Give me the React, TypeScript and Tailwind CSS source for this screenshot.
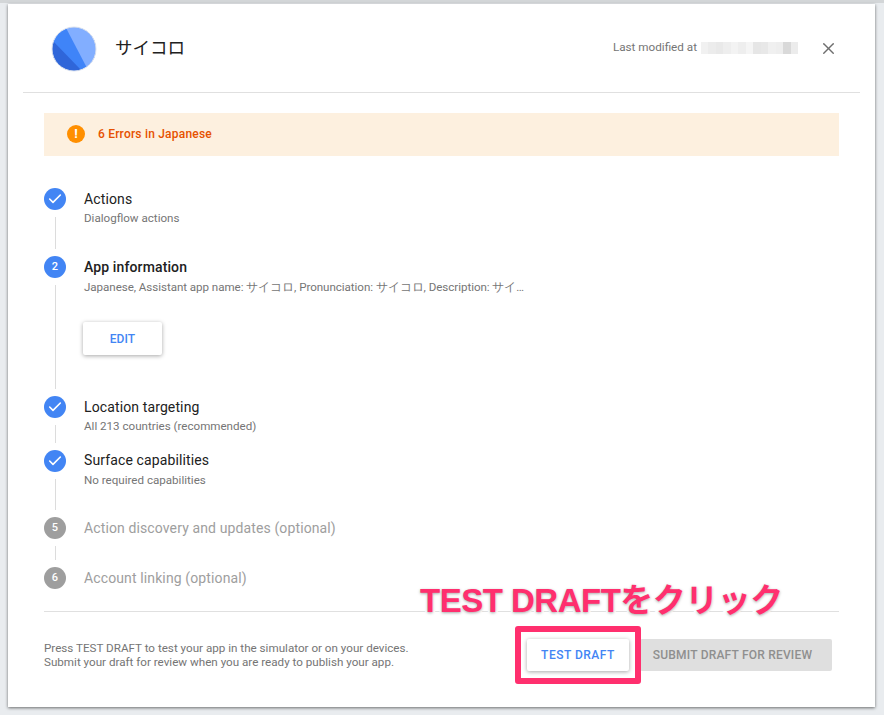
import { Check, X } from "lucide-react";
import type { ReactNode } from "react";

const blurCells = [
  "bg-[#f1f1f1]", "bg-[#ececec]", "bg-[#e9e9e9]", "bg-[#eeeeee]", "bg-[#f3f3f3]", "bg-[#eeeeee]",
  "bg-[#f5f5f5]", "bg-[#e6e6e6]", "bg-[#e8e8e8]", "bg-[#f0f0f0]", "bg-[#eeeeee]", "bg-[#d9d9d9]", "bg-[#ececec]",
];

function Logo() {
  return (
    <svg viewBox="0 0 46 46" className="w-[46px] h-[46px] shrink-0 mt-[1px]">
      <defs>
        <clipPath id="logo-clip">
          <circle cx="23" cy="23" r="22" />
        </clipPath>
      </defs>
      <g clipPath="url(#logo-clip)">
        <rect width="46" height="46" fill="#3f84f8" />
        <polygon points="14,0 46,0 46,46 36,42" fill="#82aeff" />
        <polygon points="0,13 32,46 0,46" fill="#2f66d9" />
      </g>
      <circle cx="23" cy="23" r="22" fill="none" stroke="#dfe4ee" strokeWidth="1" />
    </svg>
  );
}

function Step({
  mark,
  done,
  muted,
  line,
  heightClass,
  children,
}: {
  mark?: string;
  done?: boolean;
  muted?: boolean;
  line?: boolean;
  heightClass: string;
  children: ReactNode;
}) {
  return (
    <div className={`flex ${heightClass}`}>
      <div className="w-[22px] flex flex-col items-center shrink-0">
        <div
          className={`w-[22px] h-[22px] rounded-full flex items-center justify-center text-white text-[11px] font-medium shrink-0 ${
            muted ? "bg-[#9e9e9e]" : "bg-[#4285f4]"
          }`}
        >
          {done ? <Check className="w-[16px] h-[16px]" strokeWidth={2.4} /> : mark}
        </div>
        {line && <div className="w-px flex-1 bg-[#dcdcdc] mt-[7px] mb-[7px]" />}
      </div>
      <div className="ml-[18px] min-w-0 flex-1 tracking-[0.12px]">{children}</div>
    </div>
  );
}

export default function App() {
  return (
    <div className="relative w-[884px] h-[715px] overflow-hidden bg-[#e9ecef] pt-[4px] pl-[8px] font-['Roboto',sans-serif]">
      <div className="absolute top-0 left-0 w-full h-[3px] bg-[#d3d6d8]" />
      <div className="relative w-[867px] h-[703px] bg-white shadow-[0_1px_3px_rgba(0,0,0,0.55)] px-[15px]">
        {/* header */}
        <div className="h-[89px] flex items-center border-b border-[#e0e0e0] pl-[28px] pr-[22px]">
          <Logo />
          <div className="ml-[18px] text-[17.5px] text-[#212121] font-['Noto_Sans_CJK_JP',sans-serif] mb-[2px]">サイコロ</div>
          <div className="ml-auto text-[11.7px] text-[#757575]">Last modified at</div>
          <div className="ml-[4px] flex w-[97px] h-[12px]">
            {blurCells.map((c, i) => (
              <div key={i} className={`flex-1 ${c}`} />
            ))}
          </div>
          <X className="ml-[21px] w-[19px] h-[19px] text-[#6e6e6e]" strokeWidth={1.8} />
        </div>

        <div className="px-[21px]">
          {/* error banner */}
          <div className="mt-[20px] h-[43px] bg-[#fdf0df] flex items-center pl-[23px] pb-[2px]">
            <div className="w-[18px] h-[18px] rounded-full bg-[#ff8f00] flex items-center justify-center text-white text-[13px] font-bold leading-none">
              !
            </div>
            <span className="ml-[13px] text-[12px] tracking-[0.2px] font-medium text-[#e65100]">6 Errors in Japanese</span>
          </div>

          {/* steps */}
          <div className="mt-[32px]">
            <Step done line heightClass="h-[68px]">
              <div className="text-[14px] leading-[22px] text-[#212121]">Actions</div>
              <div className="text-[11.6px] leading-[15px] mt-[1px] tracking-normal text-[#757575]">Dialogflow actions</div>
            </Step>
            <Step mark="2" line heightClass="h-[140px]">
              <div className="text-[14px] leading-[22px] font-medium text-[#212121]">App information</div>
              <div className="text-[11.6px] leading-[15px] mt-[2px] tracking-[-0.05px] text-[#757575]">
                Japanese, Assistant app name: サイコロ, Pronunciation: サイコロ, Description: サイ…
              </div>
              <button className="-ml-[1px] mt-[27px] w-[79px] h-[33px] bg-white rounded-[2px] shadow-[0_1px_4px_rgba(0,0,0,0.35)] text-[12px] font-medium text-[#4285f4]">
                EDIT
              </button>
            </Step>
            <Step done line heightClass="h-[54px]">
              <div className="text-[14px] leading-[22px] text-[#212121]">Location targeting</div>
              <div className="text-[11.6px] leading-[15px] mt-[1px] tracking-normal text-[#757575]">All 213 countries (recommended)</div>
            </Step>
            <Step done line heightClass="h-[67px]">
              <div className="text-[14px] leading-[21px] text-[#212121]">Surface capabilities</div>
              <div className="text-[11.6px] leading-[15px] mt-[2px] tracking-normal text-[#757575]">No required capabilities</div>
            </Step>
            <Step mark="5" muted line heightClass="h-[50px]">
              <div className="text-[14px] leading-[22px] text-[#9e9e9e]">Action discovery and updates (optional)</div>
            </Step>
            <Step mark="6" muted heightClass="h-[22px]">
              <div className="text-[14px] leading-[22px] text-[#9e9e9e]">Account linking (optional)</div>
            </Step>
          </div>

          {/* footer */}
          <div className="mt-[22px] border-t border-[#e0e0e0] pt-[27px] flex">
            <div className="text-[11.65px] leading-[14px] text-[#757575] mt-[2px]">
              <div>Press TEST DRAFT to test your app in the simulator or on your devices.</div>
              <div>Submit your draft for review when you are ready to publish your app.</div>
            </div>
            <div className="ml-auto mr-[7px] flex gap-[11px]">
              <button className="w-[102px] h-[32px] bg-white rounded-[2px] shadow-[0_1px_4px_rgba(0,0,0,0.35)] text-[12px] font-medium tracking-[0.5px] text-[#4285f4]">
                TEST DRAFT
              </button>
              <button className="w-[192px] h-[32px] pr-[7px] bg-[#dfdfdf] rounded-[2px] text-[12px] font-medium tracking-[0.2px] text-[#8f8f8f]">
                SUBMIT DRAFT FOR REVIEW
              </button>
            </div>
          </div>
        </div>
      </div>

      {/* annotation */}
      <div className="absolute left-[515px] top-[626px] w-[126px] h-[58px] border-[6px] border-[#ff2f6e] rounded-[3px]" />
      <div className="absolute left-[420px] top-[581px] text-[33px] leading-[40px] font-bold tracking-[-0.5px] text-[#ff2f6e] whitespace-nowrap font-['Liberation_Sans','Noto_Sans_CJK_JP',sans-serif] [-webkit-text-stroke:5px_white] [paint-order:stroke_fill] [text-shadow:0_1px_3px_rgba(0,0,0,0.35)]">
        TEST DRAFTをクリック
      </div>
    </div>
  );
}
